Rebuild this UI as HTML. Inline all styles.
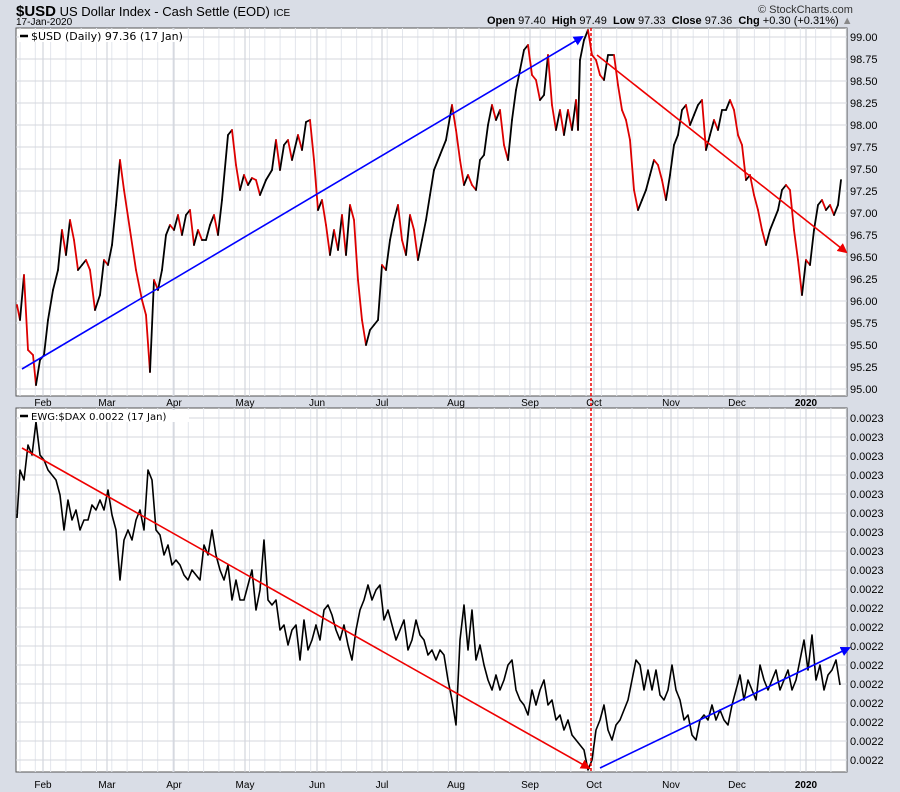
<!DOCTYPE html>
<html><head><meta charset="utf-8"><style>
body{margin:0;width:900px;height:792px;background:#d9dde6;font-family:"Liberation Sans",sans-serif;overflow:hidden;position:relative}
.t{position:absolute;white-space:nowrap;color:#000}
</style></head><body>
<div class="t" style="left:16px;top:3px;font-size:13px"><b style="font-size:15px">$USD</b> US Dollar Index - Cash Settle (EOD) <span style="font-size:10px">ICE</span></div>
<div class="t" style="left:16px;top:17px;font-size:10px">17-Jan-2020</div>
<div class="t" style="left:758px;top:4px;font-size:11px;color:#333">© StockCharts.com</div>
<div class="t" style="left:487px;top:15px;font-size:11px"><b>Open</b> 97.40 &nbsp;<b>High</b> 97.49 &nbsp;<b>Low</b> 97.33 &nbsp;<b>Close</b> 97.36 &nbsp;<b>Chg</b> +0.30 (+0.31%) <span style="color:#888">▲</span></div>
<svg id="s" width="900" height="792" style="position:absolute;left:0;top:0"></svg>
<script>
var s=document.getElementById('s'),h='';
function P(x0,y0,x1,y1){
 h+='<rect x="'+x0+'" y="'+y0+'" width="'+(x1-x0)+'" height="'+(y1-y0)+'" fill="#fff" stroke="#555"/>';
 for(var x=20;x<x1;x+=15.3)h+='<line x1="'+x+'" y1="'+y0+'" x2="'+x+'" y2="'+y1+'" stroke="#e3e6ec"/>';
 [43,107,174,245,317,382,456,530,594,671,737,806].forEach(function(x){h+='<line x1="'+x+'" y1="'+y0+'" x2="'+x+'" y2="'+y1+'" stroke="#c9ccd4"/>';});
}
P(16,28,847,396);P(16,408,847,772);
for(var i=0;i<=16;i++){var y=37+i*22;h+='<line x1="16" y1="'+y+'" x2="847" y2="'+y+'" stroke="#d4d7de"/><text x="850" y="'+(y+4)+'" font-size="11">'+(99-i*0.25).toFixed(2)+'</text>';}
for(var i=0;i<19;i++){var y=418+i*19;h+='<line x1="16" y1="'+y+'" x2="847" y2="'+y+'" stroke="#d4d7de"/><text x="850" y="'+(y+4)+'" font-size="11">'+(i<9?'0.0023':'0.0022')+'</text>';}
var m=[[43,'Feb'],[107,'Mar'],[174,'Apr'],[245,'May'],[317,'Jun'],[382,'Jul'],[456,'Aug'],[530,'Sep'],[594,'Oct'],[671,'Nov'],[737,'Dec'],[806,'2020']];
m.forEach(function(a){var st=a[1]=='2020'?' font-weight="bold"':'';h+='<text x="'+a[0]+'" y="406" font-size="10" text-anchor="middle"'+st+'>'+a[1]+'</text><text x="'+a[0]+'" y="788" font-size="10" text-anchor="middle"'+st+'>'+a[1]+'</text>';});
var A=[17,305,20,320,24,275,28,350,33,355,36,385,40,360,44,355,48,320,53,290,58,270,62,230,66,255,70,220,74,240,78,270,82,265,86,260,90,270,95,310,100,295,104,260,108,265,112,245,116,205,120,160,124,190,130,230,136,270,142,300,146,315,150,372,154,280,158,290,162,270,166,235,170,225,174,230,178,215,182,235,186,215,190,210,194,245,198,230,202,240,206,240,210,225,214,215,218,235,222,200,228,135,232,130,236,165,240,190,244,175,248,185,252,178,256,180,260,195,266,180,272,170,276,140,280,170,284,145,288,140,292,160,298,135,302,150,306,122,310,120,314,160,318,210,322,200,326,225,330,255,334,230,338,250,342,215,346,255,350,205,354,220,358,280,362,320,366,345,370,330,374,325,378,320,382,265,386,270,390,240,394,220,398,205,402,240,406,255,410,215,414,230,418,260,422,240,426,220,430,195,434,170,440,155,446,140,452,105,456,130,460,160,464,185,468,175,472,185,476,190,480,160,484,155,488,125,492,105,496,120,500,110,504,145,508,160,512,120,516,90,520,70,524,50,528,45,532,75,536,80,540,100,544,95,548,55,552,105,556,130,560,110,564,135,568,110,572,130,576,100,578,130,580,60,584,40,588,30,592,55,596,60,600,75,604,80,608,55,614,55,618,85,622,110,626,120,630,140,634,190,638,210,642,200,646,190,650,175,654,160,658,165,662,180,666,200,670,175,674,145,678,135,682,110,686,105,690,125,694,115,698,105,702,100,706,150,710,135,714,120,718,130,722,110,726,110,730,100,734,110,738,135,742,145,746,180,750,175,754,195,758,210,762,230,766,245,770,230,774,220,778,210,782,190,786,185,790,190,794,230,798,260,802,295,806,260,810,265,814,230,818,205,822,200,826,210,830,205,834,215,838,205,841,180];
for(var i=0;i<A.length-2;i+=2){h+='<line x1="'+A[i]+'" y1="'+A[i+1]+'" x2="'+A[i+2]+'" y2="'+A[i+3]+'" stroke="'+(A[i+3]>A[i+1]?'#d00':'#000')+'" stroke-width="1.8" stroke-linecap="round"/>';}
var B=[17,518,20,470,24,480,28,445,32,455,36,422,40,455,44,460,48,470,52,475,56,480,60,495,64,530,68,500,72,520,76,510,80,530,84,520,88,520,92,505,96,510,100,500,104,510,108,490,112,515,116,530,120,580,124,540,128,530,132,540,136,520,140,510,144,530,148,470,152,480,156,530,160,535,164,555,168,545,172,565,176,560,180,565,184,575,188,580,192,570,196,575,200,580,204,545,208,555,212,530,216,555,220,570,224,580,228,565,232,600,236,580,240,600,244,600,248,585,252,570,256,610,260,590,264,540,268,600,272,605,276,600,280,630,284,625,288,645,292,630,296,625,300,660,304,620,308,650,312,640,316,625,320,640,324,610,328,605,332,615,336,630,340,640,344,625,348,645,352,660,356,630,360,610,364,600,368,585,372,600,376,590,380,585,384,620,388,610,392,625,396,640,400,630,404,620,408,650,412,640,416,620,420,635,424,640,428,655,432,650,436,660,440,650,444,655,448,680,452,700,456,725,460,640,464,605,468,650,472,610,476,660,480,645,484,665,488,680,492,690,496,675,500,690,504,680,508,665,512,660,516,690,520,700,524,705,528,715,532,690,536,705,540,690,544,680,548,705,552,700,556,720,560,715,564,730,568,720,572,735,576,740,580,745,584,750,588,770,592,760,596,730,600,720,604,705,608,730,612,740,616,725,620,720,624,710,628,700,632,680,636,660,640,665,644,690,648,670,652,690,656,670,660,695,664,700,668,690,672,665,676,690,680,700,684,720,688,715,692,735,696,740,700,720,704,715,708,720,712,705,716,720,720,710,724,720,728,725,732,705,736,690,740,675,744,700,748,680,752,690,756,700,760,665,764,680,768,690,772,680,776,670,780,690,784,680,788,670,792,690,796,680,800,660,804,640,808,670,812,635,816,680,820,665,824,690,828,675,832,670,836,660,840,685];
h+='<polyline fill="none" stroke="#000" stroke-width="1.6" stroke-linejoin="round" points="'+B.join(',')+'"/>';
h+='<defs><marker id="ab" markerWidth="10" markerHeight="10" refX="8" refY="5" orient="auto" markerUnits="userSpaceOnUse"><path d="M0,0L10,5L0,10z" fill="#00f"/></marker><marker id="ar" markerWidth="10" markerHeight="10" refX="8" refY="5" orient="auto" markerUnits="userSpaceOnUse"><path d="M0,0L10,5L0,10z" fill="#e00"/></marker></defs>';
h+='<line x1="22" y1="369" x2="582" y2="37" stroke="#00f" stroke-width="1.6" marker-end="url(#ab)"/>';
h+='<line x1="597" y1="55" x2="846" y2="252" stroke="#e00" stroke-width="1.6" marker-end="url(#ar)"/>';
h+='<line x1="22" y1="448" x2="589" y2="768" stroke="#e00" stroke-width="1.6" marker-end="url(#ar)"/>';
h+='<line x1="600" y1="768" x2="849" y2="648" stroke="#00f" stroke-width="1.6" marker-end="url(#ab)"/>';
h+='<line x1="591" y1="28" x2="591" y2="772" stroke="#e00" stroke-width="1.5" stroke-dasharray="3,2"/>';
h+='<rect x="19" y="30" width="160" height="12" fill="#fff"/><line x1="20" y1="36" x2="28" y2="36" stroke="#000" stroke-width="2.5"/><text x="31" y="40" font-size="11" font-family="DejaVu Sans">$USD (Daily) 97.36 (17 Jan)</text>';
h+='<rect x="19" y="410" width="170" height="12" fill="#fff"/><line x1="20" y1="416" x2="28" y2="416" stroke="#000" stroke-width="2.5"/><text x="31" y="420" font-size="10" font-family="DejaVu Sans">EWG:$DAX 0.0022 (17 Jan)</text>';
s.innerHTML=h;
</script>
</body></html>
